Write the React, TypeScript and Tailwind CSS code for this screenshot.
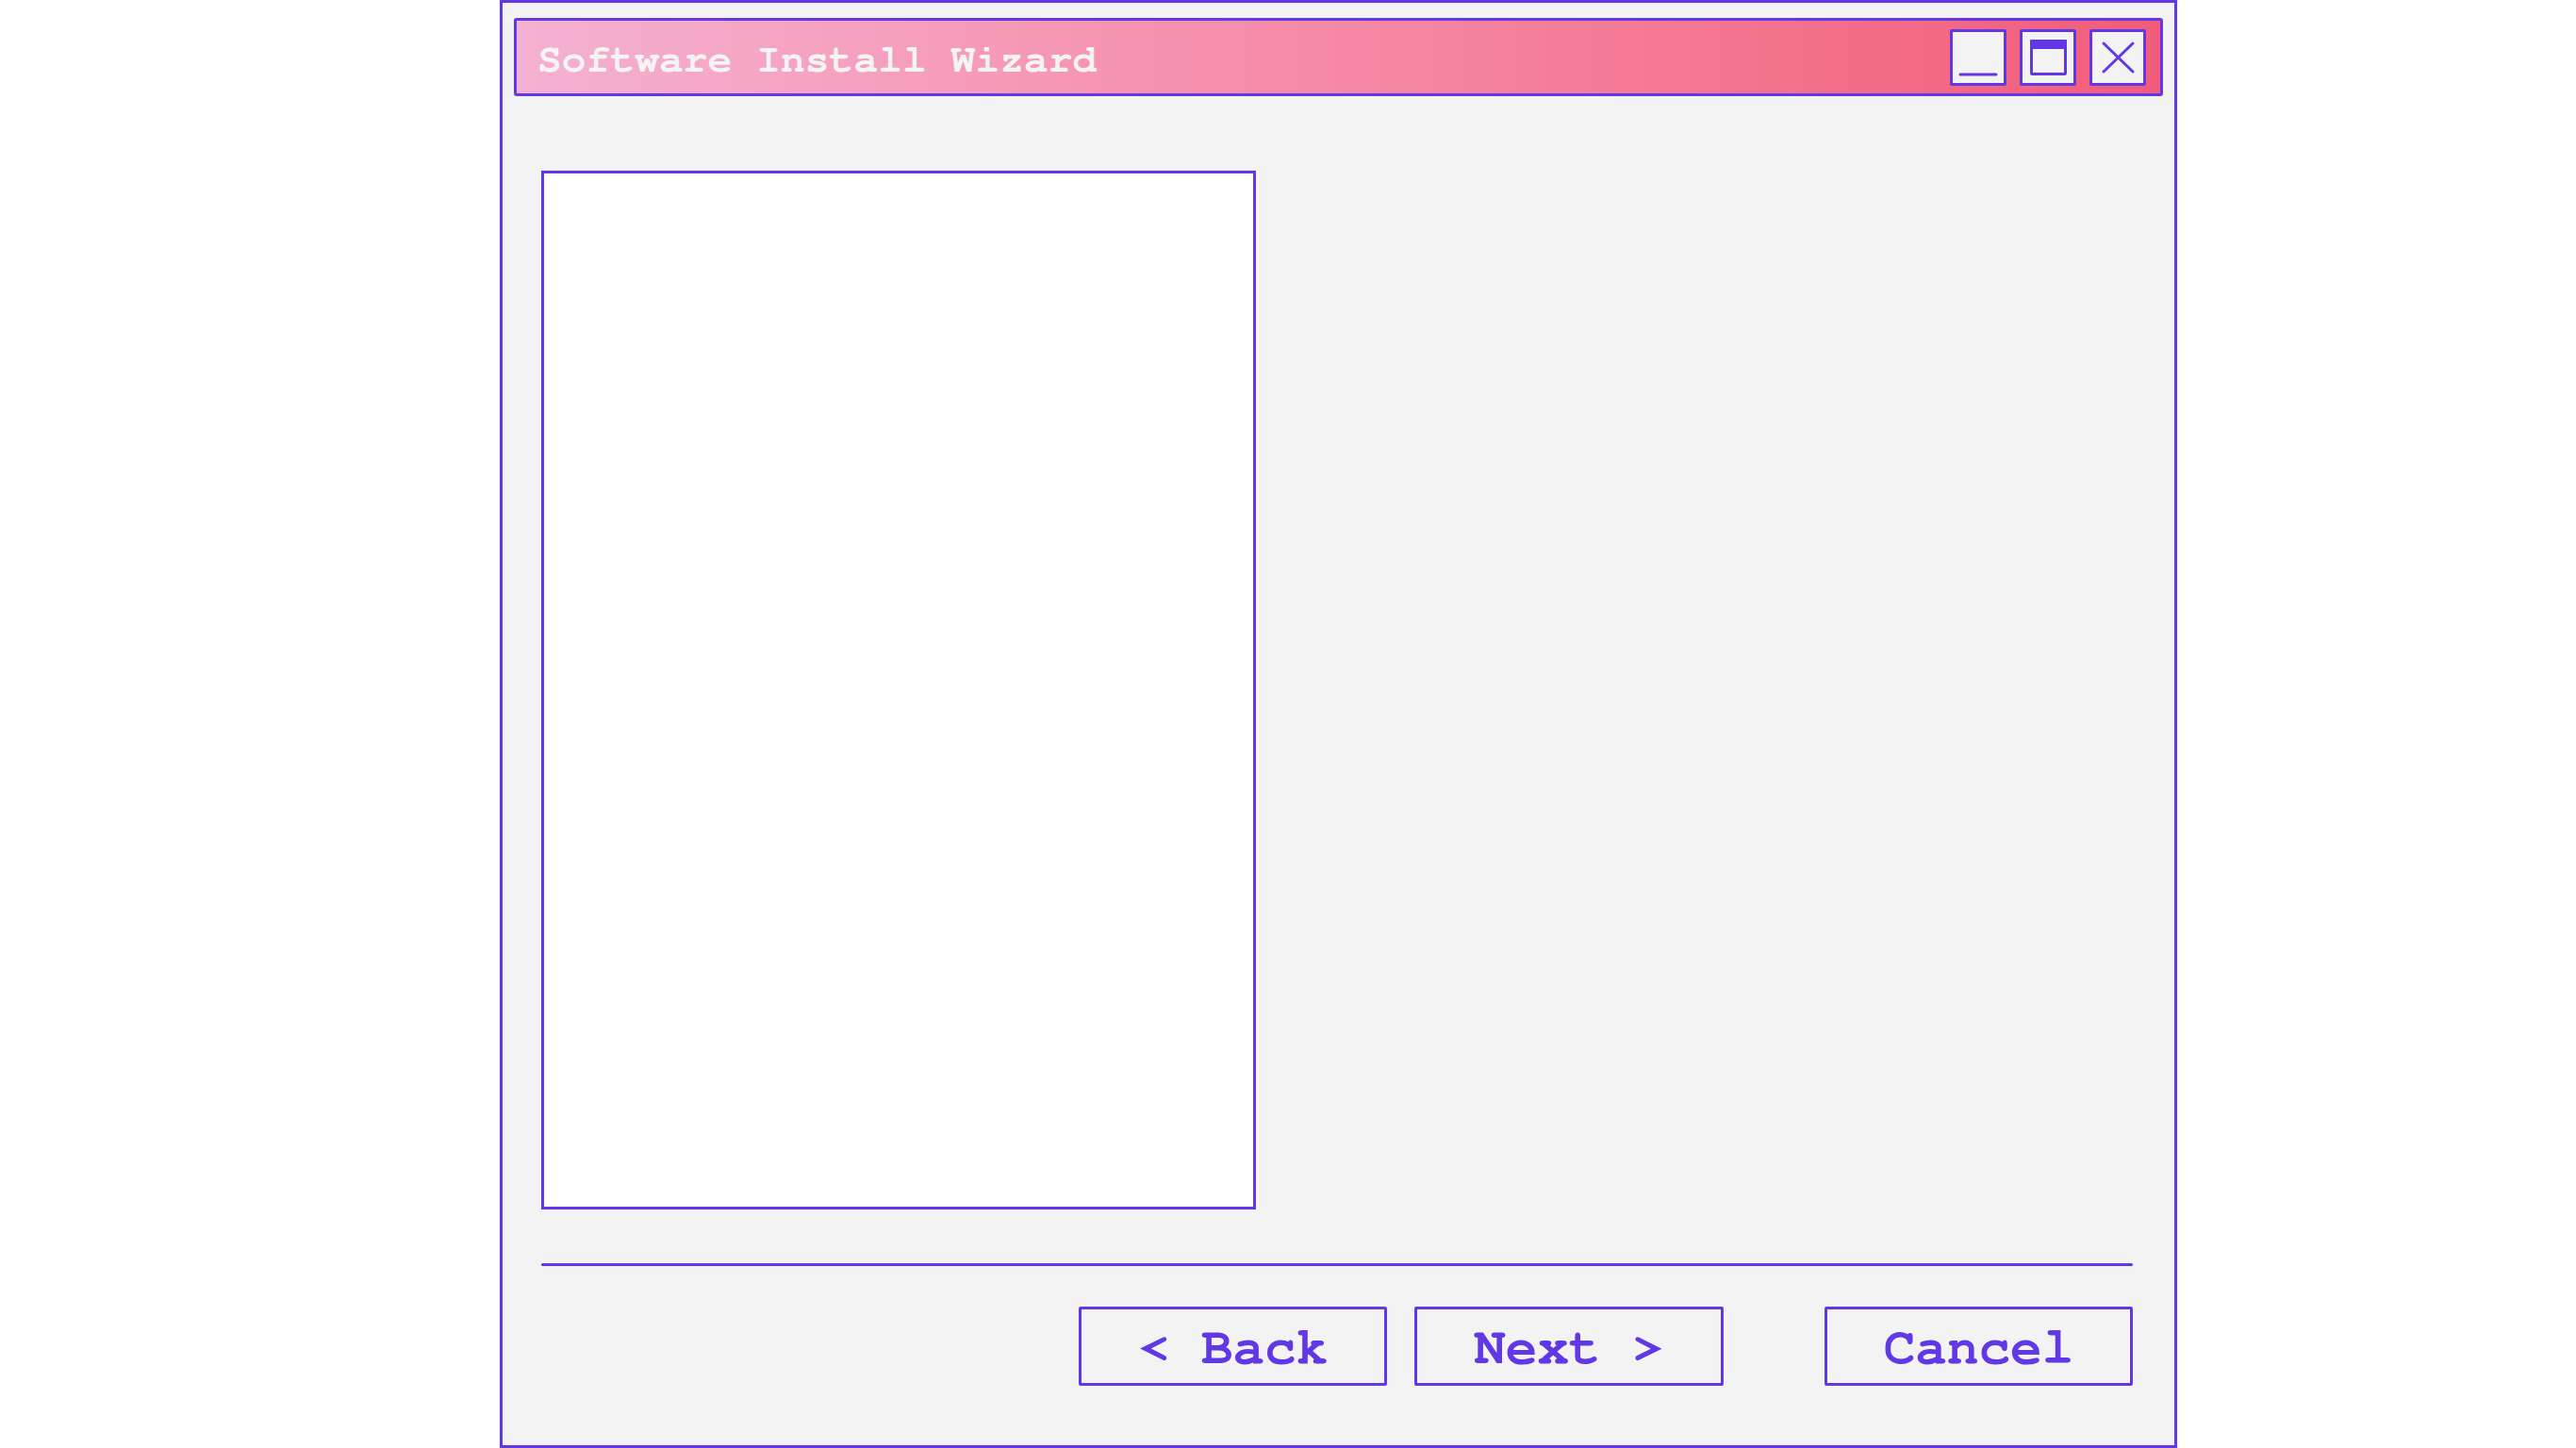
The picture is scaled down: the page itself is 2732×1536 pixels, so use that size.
export default function App() {
  return (
    <div className="h-screen w-full bg-white font-['Nimbus_Mono_PS','FreeMono','Courier','Liberation_Mono',monospace]">
      <div className="ml-[530px] flex h-[1536px] w-[1779px] flex-col border-[3px] border-[#6137e6] bg-[#f3f3f3] px-3 pt-4">
        {/* Title bar */}
        <div className="flex h-[83px] items-center justify-between rounded-[3px] border-[3px] border-[#6137e6] bg-gradient-to-r from-[#f5b1d2] to-[#f15c7a] pr-[15px] pl-[22px]">
          <span className="pt-[6px] text-[43px] leading-none font-bold text-[#f4f4f4]">
            Software Install Wizard
          </span>
          <div className="flex gap-[14px]">
            <button className="h-[60px] w-[60px] rounded-[2px] border-[3px] border-[#6137e6] bg-[#f3f3f3]">
              <svg viewBox="0 0 54 54" width="54" height="54">
                <line x1="8" y1="45" x2="46" y2="45" stroke="#6137e6" strokeWidth="3" strokeLinecap="round" />
              </svg>
            </button>
            <button className="h-[60px] w-[60px] rounded-[2px] border-[3px] border-[#6137e6] bg-[#f3f3f3]">
              <svg viewBox="0 0 54 54" width="54" height="54">
                <rect x="9.5" y="9.5" width="36" height="35" fill="none" stroke="#6137e6" strokeWidth="3" rx="1" />
                <rect x="8" y="8" width="39" height="10" fill="#6137e6" rx="1" />
              </svg>
            </button>
            <button className="h-[60px] w-[60px] rounded-[2px] border-[3px] border-[#6137e6] bg-[#f3f3f3]">
              <svg viewBox="0 0 54 54" width="54" height="54">
                <line x1="12" y1="12" x2="43" y2="42" stroke="#6137e6" strokeWidth="3" strokeLinecap="round" />
                <line x1="43" y1="12" x2="12" y2="42" stroke="#6137e6" strokeWidth="3" strokeLinecap="round" />
              </svg>
            </button>
          </div>
        </div>

        {/* Content */}
        <div className="mt-[79px] flex flex-col pr-[32px] pl-[29px]">
          <div className="h-[1102px] w-[758px] border-[3px] border-[#6137e6] bg-white" />

          <div className="mt-[57px] h-[3px] w-full rounded-full bg-[#6137e6]" />

          <div className="mt-[43px] flex justify-end">
            <button className="flex h-[84px] w-[327px] items-center justify-center rounded-[2px] border-[3px] border-[#6137e6] pt-[1px] text-[56px] leading-none font-bold text-[#6137e6]">
              &lt; Back
            </button>
            <button className="ml-[29px] flex h-[84px] w-[328px] items-center justify-center rounded-[2px] border-[3px] border-[#6137e6] pt-[1px] text-[56px] leading-none font-bold text-[#6137e6]">
              Next &gt;
            </button>
            <button className="ml-[107px] flex h-[84px] w-[327px] items-center justify-center rounded-[2px] border-[3px] border-[#6137e6] pt-[1px] text-[56px] leading-none font-bold text-[#6137e6]">
              Cancel
            </button>
          </div>
        </div>
      </div>
    </div>
  );
}
